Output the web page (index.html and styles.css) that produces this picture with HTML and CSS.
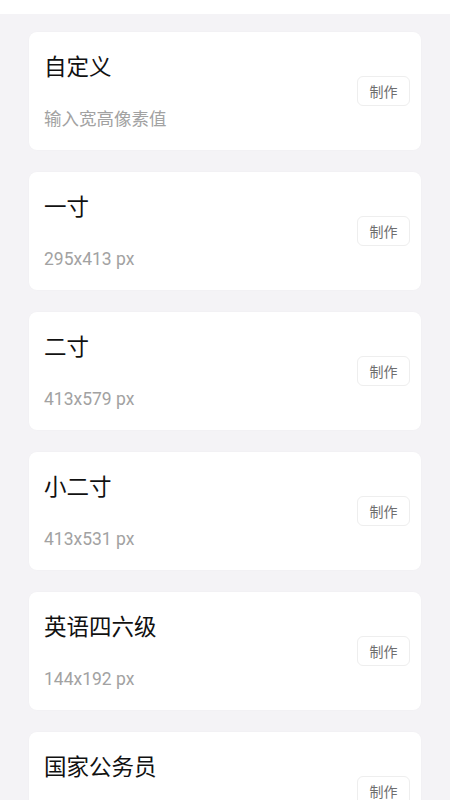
FILE: index.html
```html
<!DOCTYPE html>
<html lang="zh">
<head>
    <meta charset="UTF-8">
    <meta name="viewport" content="width=device-width, initial-scale=1.0">
    <title>证件照尺寸</title>
    <link rel="stylesheet" href="styles.css">
</head>
<body>
    <div class="topbar"></div>
    <div class="list">
        <div class="card">
            <div class="info">
                <div class="name">自定义</div>
                <div class="size">输入宽高像素值</div>
            </div>
            <div class="make">制作</div>
        </div>
        <div class="card">
            <div class="info">
                <div class="name">一寸</div>
                <div class="size">295x413 px</div>
            </div>
            <div class="make">制作</div>
        </div>
        <div class="card">
            <div class="info">
                <div class="name">二寸</div>
                <div class="size">413x579 px</div>
            </div>
            <div class="make">制作</div>
        </div>
        <div class="card">
            <div class="info">
                <div class="name">小二寸</div>
                <div class="size">413x531 px</div>
            </div>
            <div class="make">制作</div>
        </div>
        <div class="card">
            <div class="info">
                <div class="name">英语四六级</div>
                <div class="size">144x192 px</div>
            </div>
            <div class="make">制作</div>
        </div>
        <div class="card">
            <div class="info">
                <div class="name">国家公务员</div>
                <div class="size">130x170 px</div>
            </div>
            <div class="make">制作</div>
        </div>
    </div>
</body>
</html>
```

FILE: styles.css
```css
body {
    margin: 0;
    background-color: #f4f3f6;
    font-family: Roboto, "Noto Sans CJK SC", sans-serif;
    height: 800px;
    overflow: hidden;
}
.topbar {
    height: 14px;
    background-color: #fff;
}
.list {
    padding: 18px 29px 0 29px;
    display: flex;
    flex-direction: column;
    gap: 22px;
}
.card {
    background-color: #fff;
    border-radius: 8px;
    height: 118px;
    box-sizing: border-box;
    padding: 20px 11px 19px 15px;
    display: flex;
    align-items: center;
    justify-content: space-between;
    box-shadow: 0 0 2px rgba(0, 0, 0, 0.03);
}
.info {
    display: flex;
    flex-direction: column;
    gap: 25px;
    align-self: flex-start;
}
.name {
    font-size: 22.5px;
    line-height: 30px;
    color: #111;
}
.size {
    font-size: 17.5px;
    line-height: 24px;
    color: #a2a2a2;
}
.make {
    width: 53px;
    height: 30px;
    margin-bottom: 2px;
    box-sizing: border-box;
    border: 1px solid #eeeeee;
    border-radius: 6px;
    font-size: 14px;
    color: #6e6e6e;
    display: flex;
    align-items: center;
    justify-content: center;
}
```
